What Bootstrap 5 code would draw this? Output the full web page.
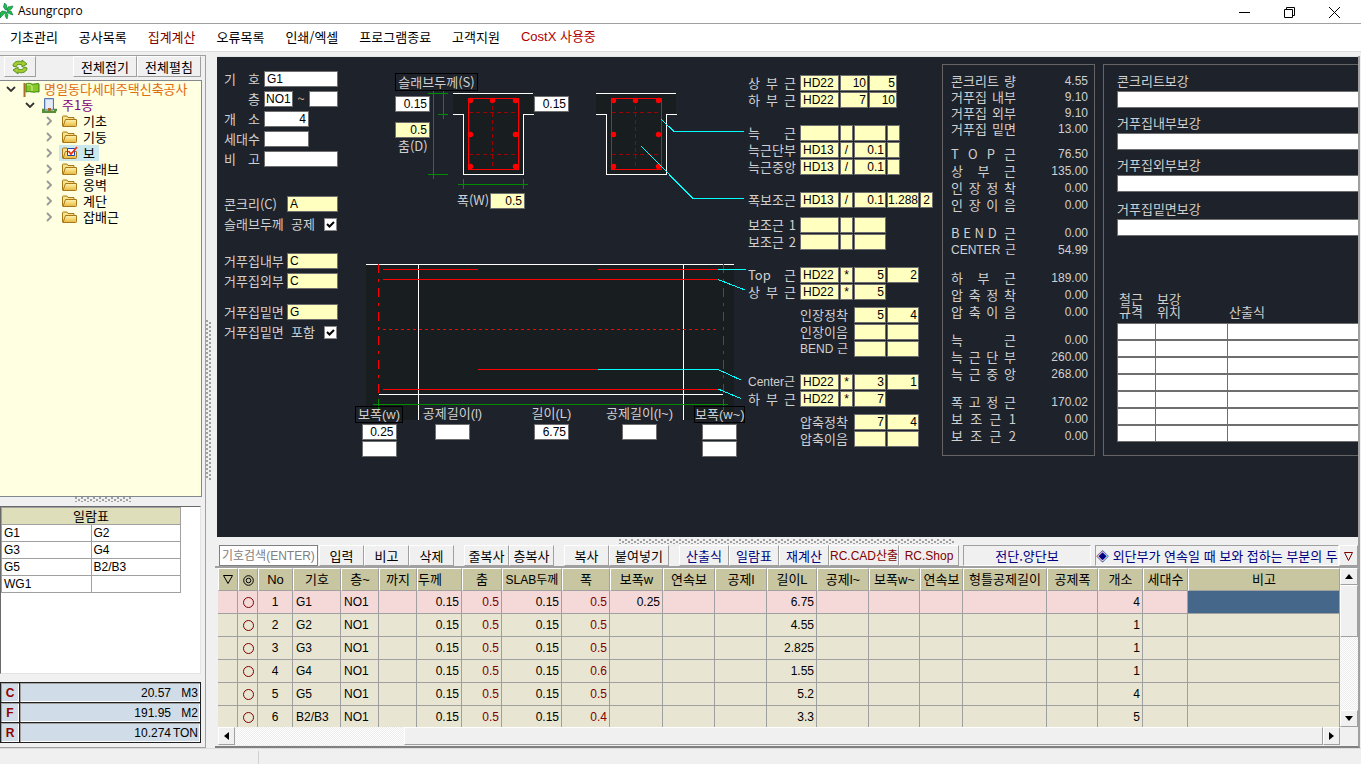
<!DOCTYPE html>
<html lang="ko">
<head>
<meta charset="utf-8">
<meta name="viewport" content="width=device-width, initial-scale=1">
<title>Asungrcpro</title>
<link href="https://cdn.jsdelivr.net/npm/bootstrap@5.3.0/dist/css/bootstrap.min.css" rel="stylesheet">
<style>
:root{--ui:"Noto Sans CJK KR",sans-serif;--latin:"Liberation Sans","Noto Sans CJK KR",sans-serif;--line:#a0a0a0;--face:#f0f0f0;--dark:#1e222a}
body{font:13px/16px var(--ui);color:#000;background:var(--face);overflow:hidden}
button,input{font:inherit;color:inherit;border-radius:0}
.app{height:100vh}
/* window chrome */
.titlebar{height:24px;background:#fff;border-bottom:1px solid var(--line);font:12px/22px "Open Sans",sans-serif}
.winbtn{width:45px;border:0;background:none;padding:0}
.menubar{height:28px;background:#fff;border-bottom:1px solid #dcdcdc;gap:21px;padding:0 10px}
.menubar a{color:#000;text-decoration:none;line-height:26px}
.menubar a.alert-item,.maroon{color:#800000}
.menubar a.cost{color:#b00000;font-family:var(--latin)}
/* left side */
.side{width:206px;border:solid var(--line);border-width:1px 1px 1px 0;margin-top:3px;background:var(--face)}
.raised{border:1px solid;border-color:#fff #a0a0a0 #a0a0a0 #fff;background:var(--face);padding:0;line-height:16px;text-align:center;white-space:nowrap}
.raised.rc{font:12px/16px var(--latin)}
.foldbtn{width:64px;height:21px}
.treebox{background:#ffffe1;border:1px solid #828790;border-left:0;margin:3px 3px 0 0;overflow:hidden}
.treebox li{height:16px;display:flex;align-items:center;white-space:nowrap}
.treebox svg{flex:none}
.lv0{padding-left:6px}.lv1{padding-left:25px}.lv2{padding-left:46px}
.pick{display:flex;align-items:center;gap:5px;height:16px;padding:0 4px 0 2px}
.lv1 .pick,.lv0 .pick{gap:4px}
.lv2 .pick{margin-left:-1px}
.pick.active-node{background:#cce8ef}
.grip{background:radial-gradient(circle at 1px 1px,#a0a0a0 1px,transparent 1px) 0 0/6px 4px,radial-gradient(circle at 1px 1px,#a0a0a0 1px,transparent 1px) 3px 2px/6px 4px}
.grip-s{width:56px;height:5px}
.grip-l{width:336px;height:5px}
.grip-v{width:5px;height:160px}
.listbox{height:168px;background:#fff;border:1px solid #696969;border-right-color:#e3e3e3;border-bottom-color:#e3e3e3;margin-right:4px}
.listbox table{width:180px;table-layout:fixed;border-collapse:collapse}
.listbox th,.listbox td{border:1px solid var(--line);height:17px;padding:0 2px;line-height:14px;font-weight:400}
.listbox td{font:12px/14px var(--latin)}
.listbox th{background:#dedebb;text-align:center}
.totals{background:#d0dce8;border:1px solid #202020;margin:8px 4px 4px 0;font:12px/16px var(--latin)}
.totals th,.totals td{border:1px solid #202020;height:20px;padding:0 2px;box-shadow:inset 1px 1px #a0a0a0,inset -1px -1px #fff}
.totals th{width:19px;text-align:center;color:#900000;font-weight:700}
.unit{display:inline-block;width:27px}
/* design pane */
.work{min-width:0;border-right:2px solid var(--line);border-bottom:2px solid #808080;margin:4px 1px 0 0}
.design{background:var(--dark);color:#d0d0d0;border-top:1px solid #dfe8e4;margin-left:2px;overflow:hidden;min-height:0}
.fld{height:16px;border:1px solid #6e6e6e;background:#fff;color:#000;padding:0 2px;font:12px/14px var(--latin);min-width:0;display:block}
.yel{background:#ffffc0}
.num{text-align:right}
.form-col{width:114px;margin:14px 7px 0 7px}
.frow{height:20px;display:flex;align-items:flex-start;justify-content:space-between}
.just{width:36px;text-align:justify;text-align-last:justify;white-space:nowrap}
.w74{width:74px}.w51{width:51px}.w45{width:45px}.w29{width:29px}.w35{width:35px}
.w29.fld{padding:0 1px;flex:none}
.c39{width:39px}.c28{width:28px}.c13{width:13px}.c32{width:32px}
.c13.fld{padding:0;text-align:center}
.c32.fld,.c28.fld{padding:0 1px}
.tick{appearance:none;width:13px;height:13px;margin:2px 1px 0 0;border:1px solid #888;background:#fff url("data:image/svg+xml,%3Csvg xmlns='http://www.w3.org/2000/svg' viewBox='0 0 11 11'%3E%3Cpath d='M2 5l2.5 2.5L9 3' fill='none' stroke='%23000' stroke-width='2'/%3E%3C/svg%3E")}
.gap-a{margin-top:25px}.gap-b{margin-top:17px}.gap-c{margin-top:11px}
.diagram{width:393px;margin-left:10px;flex:none}
.diagram>svg{display:block;overflow:visible}
.over{position:absolute}
.boxed{border:1px solid #000;line-height:16px;text-align:center;white-space:nowrap}
.diagram label.boxed{line-height:15px}
.dims{display:grid;grid-template-columns:48px 99px 99px 77px 67px}
.dims>div{display:flex;flex-direction:column;align-items:center;gap:1px}
.dims>.at-end{width:51px;justify-self:end}
.dims label{height:17px;white-space:nowrap;font-family:var(--latin)}
.bars{width:188px;flex:none;margin-top:18px}
.brow{display:flex;gap:1px;height:17px}
.brow .just{width:48px;margin-right:3px;flex:none}
.brow .mixed{font:12px/16px var(--latin)}
.brow.sub{padding-left:52px}
.brow.sub .just{margin-right:5px}
.g16{margin-top:16px}.g8{margin-top:8px}.g6{margin-top:6px}
.sumbox{width:153px;height:392px;flex:none;border:1px solid #646464;margin:7px 8px 0 6px;padding:8px 6px 0 8px}
.sumbox dl{margin:0 0 9px}
.sumbox dl.loose{margin-bottom:11px}
.sumbox dl>div{display:flex;justify-content:space-between;height:16px}
.sumbox dl.loose>div{height:17px}
.sumbox dt{font-weight:400;width:65px;text-align-last:justify;white-space:nowrap}
.sumbox dd{margin:0;font:12px/16px var(--latin)}
.addbox{height:392px;border:1px solid #646464;border-right:0;margin-top:7px;padding:8px 0 0 13px;min-width:0}
.addbox .fld{width:100%;height:17px;border-right:0}
.addbox .item{height:42px}
.addbox .item.last-item{margin-top:2px;height:80px}
.addbox label{display:block;height:18px}
.addbox table{width:100%;table-layout:fixed;border-collapse:collapse}
.addbox th{font-weight:400;padding:0 2px 5px;line-height:13px;height:42px;vertical-align:bottom;text-align:left}
.addbox td{padding:0}
/* lower grid */
.tools{height:23px;border-bottom:2px solid var(--line);padding-left:4px;margin-top:8px}
.tools .raised{height:21px;flex:none}
.tools input{width:99px;flex:none;border:1px solid #808080;background:#fff;padding:0 2px;height:21px;font:12px/16px var(--latin);margin-right:1px}
.tools input::placeholder{color:#808080;opacity:1}
.tools .apart{margin-left:10px}
.navy{color:#000080}
.sunk{border:1px solid;border-color:#a0a0a0 #fff #fff #a0a0a0;line-height:19px;text-align:center;white-space:nowrap;overflow:hidden}
.b45{width:45px}.b60{width:60px}.b50{width:50px}.b70{width:70px}
.gridwrap{height:178px;margin-left:3px}
.clip{height:159px;overflow:hidden}
.members{width:100%;table-layout:fixed;border-collapse:separate;border-spacing:0;background:#e8e6d2}
.members th{height:23px;background:#c8c6a0;border:1px solid;border-color:#fff #a0a0a0 #a0a0a0 #fff;font:13px/18px var(--latin);text-align:center;padding:0;white-space:nowrap;overflow:hidden}
.members th.mixed{font-size:12px}
.members td{height:23px;border:solid #a0a0a0;border-width:0 1px 1px 0;padding:0 2px 1px 3px;font:12px/16px var(--latin);white-space:nowrap}
.members tr.now td{background:#f5d9d9}
.members tr.now td.cur{background:#456789}
.r{text-align:right}.m{text-align:center}
.members td.m{padding:0 0 1px}
.ring{width:11px;height:11px;border:1px solid #800000;border-radius:50%;display:block;margin:1px auto 0}
.scroll{background:repeating-conic-gradient(#fff 0 25%,#ececec 0 50%) 0 0/2px 2px}
.scroll button{border:1px solid;border-color:#fff #a0a0a0 #a0a0a0 #fff;background:var(--face);padding:0;display:flex;align-items:center;justify-content:center}
.vs{width:18px;flex:none}.vs button{height:17px}
.hs{height:18px}.hs button{width:17px}
.thumb{background:var(--face);border:1px solid;border-color:#fff #a0a0a0 #a0a0a0 #fff}
.status{height:16px;border-top:1px solid #dcdcdc}
.status div{width:259px;border-right:1px solid #d0d0d0;margin-top:2px}
</style>
</head>
<body>
<div class="app d-flex flex-column">
<header class="titlebar d-flex">
  <svg width="14" height="22" viewBox="0 0 14 22" class="me-1" aria-hidden="true"><g fill="#20c040" stroke="#064" stroke-width=".6"><path d="M5.500 10L3.500 7 4.500 3l2 2 .5 5z"/><path d="M7 10l1-3 5-1-1.500 3L8 11z"/><path d="M7 11.500l4-.5 2 4-3-1-3-1.500z"/><path d="M6 12l2 3-1 4-2-3z"/><path d="M5.500 11.500L2 11l-2 2v5l2-2 3-3z"/></g></svg>
  <span>Asungrcpro</span>
  <div class="ms-auto d-flex">
    <button class="winbtn" aria-label="최소화"><svg width="11" height="11"><path d="M0 5.500h11" stroke="#000"/></svg></button>
    <button class="winbtn" aria-label="복원"><svg width="11" height="11" fill="none" stroke="#000"><path d="M.5 2.500h8v8h-8zM2.500 2.500v-2h8v8h-2"/></svg></button>
    <button class="winbtn me-1" aria-label="닫기"><svg width="11" height="11" stroke="#000"><path d="M0 0l11 11M11 0L0 11"/></svg></button>
  </div>
</header>
<nav class="menubar d-flex">
  <a href="#">기초관리</a><a href="#">공사목록</a><a href="#" class="alert-item">집계계산</a><a href="#">오류목록</a><a href="#">인쇄/엑셀</a><a href="#">프로그램종료</a><a href="#">고객지원</a><a href="#" class="cost">CostX 사용중</a>
</nav>

<main class="d-flex flex-grow-1" style="min-height:0">
<aside class="side d-flex flex-column flex-shrink-0">
  <div class="d-flex px-1 gap-0">
    <button class="raised" style="width:32px" aria-label="새로고침"><svg width="16" height="16" viewBox="0 0 16 16"><g fill="#a4cc30" stroke="#4c8a18" stroke-width=".9"><path d="M1 7c0-4 5-6 9-4V1l5 4-5 3V6C7 5 5 5 4 8z"/><path d="M15 9c0 4-5 6-9 4v2l-5-4 5-3v2c3 1 5 1 6-2z"/></g></svg></button>
    <button class="raised foldbtn ms-auto">전체접기</button>
    <button class="raised foldbtn">전체펼침</button>
  </div>
  <div class="treebox flex-grow-1">
    <svg width="0" height="0" class="d-block"><defs>
      <g id="open"><path d="M1 1l4 4 4-4" fill="none" stroke="#333" stroke-width="1.800"/></g>
      <g id="shut"><path d="M1 1l4 4-4 4" fill="none" stroke="#999" stroke-width="1.800"/></g>
      <linearGradient id="gold" x2="0" y2="1"><stop stop-color="#fff4b0"/><stop offset="1" stop-color="#e8b83c"/></linearGradient>
      <g id="folder" stroke="#a87818"><path d="M1.500 12V3q0-1 1-1H6l1 1.500h6V12z" fill="#f8e08c"/><path d="M4.500 5.500h11v6q0 1-1 1H2z" fill="url(#gold)"/></g>
    </defs></svg>
    <ul class="list-unstyled mb-0">
      <li class="lv0"><svg width="10" height="6" class="me-1"><use href="#open"/></svg><span class="pick"><svg width="18" height="15"><path d="M2.500 1v14" stroke="#a87028" stroke-width="2"/><path d="M4 2c4-2 6 1 8 0 2 0 4-1 5 0v8c-3-1-4 1-6 0-3 0-4-1-7 0z" fill="#86c828" stroke="#3c8010"/><path d="M5 3c4-1 4 1 5 1v5" stroke="#d8f49c" fill="none"/></svg><span style="color:#e06c10">명일동다세대주택신축공사</span></span></li>
      <li class="lv1"><svg width="10" height="6" class="me-1"><use href="#open"/></svg><span class="pick"><svg width="17" height="15"><path d="M3.500.5h9V12h-9z" fill="#b8ccec" stroke="#5478b0"/><path d="M5 3h7M5 5h7M5 7h7M5 9h7M6 2v9M8 2v9M10 2v9" stroke="#fff" stroke-width=".8"/><path d="M7 10h3v4H7z" fill="#b06428"/><path d="M1 14h14M1 12h3M13 12h3" stroke="#589038" stroke-width="2.500"/></svg><span style="color:#800080">주1동</span></span></li>
      <li class="lv2"><svg width="6" height="10" class="me-2"><use href="#shut"/></svg><span class="pick"><svg width="17" height="14"><use href="#folder"/></svg>기초</span></li>
      <li class="lv2"><svg width="6" height="10" class="me-2"><use href="#shut"/></svg><span class="pick"><svg width="17" height="14"><use href="#folder"/></svg>기둥</span></li>
      <li class="lv2"><svg width="6" height="10" class="me-2"><use href="#shut"/></svg><span class="pick active-node"><svg width="17" height="14"><use href="#folder"/><path d="M6.500 2.500h7v7h-7z" fill="#fff" stroke="#1848b0"/><path d="M7.500 5l2.500 3L16 1" fill="none" stroke="#f03010" stroke-width="1.800"/></svg>보</span></li>
      <li class="lv2"><svg width="6" height="10" class="me-2"><use href="#shut"/></svg><span class="pick"><svg width="17" height="14"><use href="#folder"/></svg>슬래브</span></li>
      <li class="lv2"><svg width="6" height="10" class="me-2"><use href="#shut"/></svg><span class="pick"><svg width="17" height="14"><use href="#folder"/></svg>옹벽</span></li>
      <li class="lv2"><svg width="6" height="10" class="me-2"><use href="#shut"/></svg><span class="pick"><svg width="17" height="14"><use href="#folder"/></svg>계단</span></li>
      <li class="lv2"><svg width="6" height="10" class="me-2"><use href="#shut"/></svg><span class="pick"><svg width="17" height="14"><use href="#folder"/></svg>잡배근</span></li>
    </ul>
  </div>
  <div class="grip grip-s mx-auto"></div>
  <div class="listbox mt-1">
    <table>
      <thead><tr><th colspan="2">일람표</th></tr></thead>
      <tbody><tr><td>G1</td><td>G2</td></tr><tr><td>G3</td><td>G4</td></tr><tr><td>G5</td><td>B2/B3</td></tr><tr><td>WG1</td><td></td></tr></tbody>
    </table>
  </div>
  <table class="totals">
    <tr><th scope="row">C</th><td class="r">20.57<span class="unit">M3</span></td></tr>
    <tr><th scope="row">F</th><td class="r">191.95<span class="unit">M2</span></td></tr>
    <tr><th scope="row">R</th><td class="r">10.274<span class="unit">TON</span></td></tr>
  </table>
</aside>
<div class="d-flex align-items-center flex-shrink-0" style="width:9px"><div class="grip grip-v"></div></div>

<section class="work d-flex flex-column flex-grow-1">
  <div class="design d-flex flex-grow-1">
    <form class="form-col flex-shrink-0">
      <div class="frow"><label class="just" for="f1">기 호</label><input id="f1" class="fld w74" value="G1"></div>
      <div class="frow"><label class="just num" style="text-align-last:right" for="f2">층</label><div class="d-flex justify-content-between w74"><input id="f2" class="fld w29" value="NO1"><label for="f3" style="color:#e8b890">~</label><input id="f3" class="fld w29"></div></div>
      <div class="frow justify-content-start"><label class="just me-1" for="f4">개 소</label><input id="f4" class="fld w45 num" value="4"></div>
      <div class="frow justify-content-start"><label class="just me-1" for="f5">세대수</label><input id="f5" class="fld w45"></div>
      <div class="frow"><label class="just" for="f6">비 고</label><input id="f6" class="fld w74"></div>
      <div class="frow gap-a"><label for="f7">콘크리(C)</label><input id="f7" class="fld yel w51" value="A"></div>
      <div class="frow"><label for="f8">슬래브두께&nbsp; 공제</label><input type="checkbox" id="f8" class="tick" checked></div>
      <div class="frow gap-b"><label for="f9">거푸집내부</label><input id="f9" class="fld yel w51" value="C"></div>
      <div class="frow"><label for="f10">거푸집외부</label><input id="f10" class="fld yel w51" value="C"></div>
      <div class="frow gap-c"><label for="f11">거푸집밑면</label><input id="f11" class="fld yel w51" value="G"></div>
      <div class="frow"><label for="f12">거푸집밑면&nbsp; 포함</label><input type="checkbox" id="f12" class="tick" checked></div>
    </form>

    <div class="diagram position-relative">
      <svg width="393" height="349" viewBox="355 57 393 349" fill="none" shape-rendering="crispEdges" aria-label="보 단면도">
        <defs><g id="sect">
          <path d="M453 93h80v21h-10v60h-60v-60h-10z" fill="#181e20"/>
          <path d="M453 93.500h80M453 114.500h10.500v60h60v-60h10" stroke="#fff"/>
          <path d="M469 112.500h48M469 154.500h48M492.500 99v70" stroke="#a00000" stroke-dasharray="4 3"/>
          <path d="M468.500 98.500h50v71h-50z" stroke="#f00"/>
          <g fill="#f00" shape-rendering="auto"><circle cx="470.500" cy="100.500" r="2.700"/><circle cx="492.500" cy="100.500" r="2.700"/><circle cx="515.500" cy="100.500" r="2.700"/><circle cx="470.500" cy="134.500" r="2.700"/><circle cx="515.500" cy="134.500" r="2.700"/><circle cx="470.500" cy="166.500" r="2.700"/><circle cx="515.500" cy="166.500" r="2.700"/></g>
        </g></defs>
        <use href="#sect"/><use href="#sect" x="143"/>
        <path d="M433.500 91v88M443.500 91v28M428 93.500h20M438 114.500h10M428 174.500h20M458 184.500h70M463.500 179v10M523.500 179v10" stroke="#008c00"/>
        <path d="M366 264h368v130H366zM366 394h53v26h-53zM683 394h51v26h-51z" fill="#181e20"/>
        <path d="M366 264.500h368M418.500 264v156M683.500 264v156M379 394.500h344" stroke="#fff"/>
        <path d="M383 269.500h95M598 269.500h120M383 279.500h335M478 369.500h120M383 389.500h335" stroke="#f00"/>
        <path d="M383 329.500h335" stroke="#f00" stroke-dasharray="3 3"/>
        <path d="M378.500 264v130M723.500 264v130" stroke="#f00" stroke-dasharray="9 6 3 6"/>
        <path d="M373 404.500h355M378.500 399v11M723.500 399v11" stroke="#008c00"/>
        <path d="M661 119l13 12.500h70M641 146l52 52.500h51M718 269.500h28M718 279.500l27 10.500M598 369.500h120l23 10.500M718 389l23 9.500" stroke="#0ff"/>
      </svg>
      <label class="over boxed" for="s1" style="left:40px;top:16px;width:83px;height:18px">슬래브두께(S)</label>
      <input id="s1" class="fld num w35 over" style="left:40px;top:39px" value="0.15">
      <input id="s2" class="fld num w35 yel over" style="left:40px;top:65px" value="0.5">
      <label class="over" for="s2" style="left:43px;top:81px">춤(D)</label>
      <input aria-label="슬래브두께 우측" class="fld num w35 over" style="left:179px;top:39px" value="0.15">
      <label class="over" for="s4" style="left:102px;top:135px">폭(W)</label>
      <input id="s4" class="fld num w35 yel over" style="left:135px;top:136px" value="0.5">
      <div class="dims position-relative">
        <div><label class="boxed w-100" for="d1">보폭(w)</label><input id="d1" class="fld num w35" value="0.25"><input aria-label="보폭(w) 2" class="fld w35"></div>
        <div><label for="d2">공제길이(l)</label><input id="d2" class="fld w35"></div>
        <div><label for="d3">길이(L)</label><input id="d3" class="fld num w35" value="6.75"></div>
        <div><label for="d4">공제길이(l~)</label><input id="d4" class="fld w35"></div>
        <div class="at-end"><label class="boxed w-100" for="d5">보폭(w~)</label><input id="d5" class="fld w35"><input aria-label="보폭(w~) 2" class="fld w35"></div>
      </div>
    </div>

    <form class="bars">
      <div class="brow"><label class="just" for="b1">상 부 근</label><input id="b1" class="fld yel c39" value="HD22"><input aria-label="상부근 수량" class="fld yel c28 num" value="10"><input aria-label="상부근 수량 2" class="fld yel c28 num" value="5"></div>
      <div class="brow"><label class="just" for="b2">하 부 근</label><input id="b2" class="fld yel c39" value="HD22"><input aria-label="하부근 수량" class="fld yel c28 num" value="7"><input aria-label="하부근 수량 2" class="fld yel c28 num" value="10"></div>
      <div class="brow g16"><label class="just" for="b3">늑 근</label><input id="b3" class="fld yel c39"><input aria-label="늑근 기호" class="fld yel c13"><input aria-label="늑근 간격" class="fld yel c32"><input aria-label="늑근 수" class="fld yel c13"></div>
      <div class="brow"><label class="just" for="b4">늑근단부</label><input id="b4" class="fld yel c39" value="HD13"><input aria-label="늑근단부 기호" class="fld yel c13" value="/"><input aria-label="늑근단부 간격" class="fld yel c32 num" value="0.1"><input aria-label="늑근단부 수" class="fld yel c13"></div>
      <div class="brow"><label class="just" for="b5">늑근중앙</label><input id="b5" class="fld yel c39" value="HD13"><input aria-label="늑근중앙 기호" class="fld yel c13" value="/"><input aria-label="늑근중앙 간격" class="fld yel c32 num" value="0.1"><input aria-label="늑근중앙 수" class="fld yel c13"></div>
      <div class="brow g16"><label class="just" for="b6">폭보조근</label><input id="b6" class="fld yel c39" value="HD13"><input aria-label="폭보조근 기호" class="fld yel c13" value="/"><input aria-label="폭보조근 간격" class="fld yel c32 num" value="0.1"><input aria-label="폭보조근 길이" class="fld yel c32 num px-0" value="1.288"><input aria-label="폭보조근 수" class="fld yel c13" value="2"></div>
      <div class="brow g8"><label class="just" for="b7">보조근 1</label><input id="b7" class="fld yel c39"><input aria-label="보조근 1 기호" class="fld yel c13"><input aria-label="보조근 1 간격" class="fld yel c32"></div>
      <div class="brow"><label class="just" for="b8">보조근 2</label><input id="b8" class="fld yel c39"><input aria-label="보조근 2 기호" class="fld yel c13"><input aria-label="보조근 2 간격" class="fld yel c32"></div>
      <div class="brow g16"><label class="just" for="b9">Top 근</label><input id="b9" class="fld yel c39" value="HD22"><input aria-label="Top근 기호" class="fld yel c13" value="*"><input aria-label="Top근 수" class="fld yel c32 num" value="5"><input aria-label="Top근 수 2" class="fld yel c32 num" value="2"></div>
      <div class="brow"><label class="just" for="b10">상 부 근</label><input id="b10" class="fld yel c39" value="HD22"><input aria-label="상부근 기호" class="fld yel c13" value="*"><input aria-label="상부근 수" class="fld yel c32 num" value="5"></div>
      <div class="brow sub g6"><label class="just" for="b11">인장정착</label><input id="b11" class="fld yel c32 num" value="5"><input aria-label="인장정착 2" class="fld yel c32 num" value="4"></div>
      <div class="brow sub"><label class="just" for="b12">인장이음</label><input id="b12" class="fld yel c32"><input aria-label="인장이음 2" class="fld yel c32"></div>
      <div class="brow sub"><label class="just mixed" for="b13">BEND 근</label><input id="b13" class="fld yel c32"><input aria-label="BEND근 2" class="fld yel c32"></div>
      <div class="brow g16"><label class="just mixed" for="b14">Center근</label><input id="b14" class="fld yel c39" value="HD22"><input aria-label="Center근 기호" class="fld yel c13" value="*"><input aria-label="Center근 수" class="fld yel c32 num" value="3"><input aria-label="Center근 수 2" class="fld yel c32 num" value="1"></div>
      <div class="brow"><label class="just" for="b15">하 부 근</label><input id="b15" class="fld yel c39" value="HD22"><input aria-label="하부근 기호" class="fld yel c13" value="*"><input aria-label="하부근 수" class="fld yel c32 num" value="7"></div>
      <div class="brow sub g6"><label class="just" for="b16">압축정착</label><input id="b16" class="fld yel c32 num" value="7"><input aria-label="압축정착 2" class="fld yel c32 num" value="4"></div>
      <div class="brow sub"><label class="just" for="b17">압축이음</label><input id="b17" class="fld yel c32"><input aria-label="압축이음 2" class="fld yel c32"></div>
    </form>

    <div class="sumbox">
      <dl><div><dt>콘크리트 량</dt><dd>4.55</dd></div><div><dt>거푸집 내부</dt><dd>9.10</dd></div><div><dt>거푸집 외부</dt><dd>9.10</dd></div><div><dt>거푸집 밑면</dt><dd>13.00</dd></div></dl>
      <dl class="loose"><div><dt>T O P 근</dt><dd>76.50</dd></div><div><dt>상 부 근</dt><dd>135.00</dd></div><div><dt>인 장 정 착</dt><dd>0.00</dd></div><div><dt>인 장 이 음</dt><dd>0.00</dd></div></dl>
      <dl class="loose"><div><dt>B E N D &nbsp;근</dt><dd>0.00</dd></div><div><dt style="font-family:var(--latin);font-size:12px">CENTER 근</dt><dd>54.99</dd></div></dl>
      <dl class="loose"><div><dt>하 부 근</dt><dd>189.00</dd></div><div><dt>압 축 정 착</dt><dd>0.00</dd></div><div><dt>압 축 이 음</dt><dd>0.00</dd></div></dl>
      <dl class="loose"><div><dt>늑 근</dt><dd>0.00</dd></div><div><dt>늑 근 단 부</dt><dd>260.00</dd></div><div><dt>늑 근 중 앙</dt><dd>268.00</dd></div></dl>
      <dl class="loose"><div><dt>폭 고 정 근</dt><dd>170.02</dd></div><div><dt>보 조 근 1</dt><dd>0.00</dd></div><div><dt>보 조 근 2</dt><dd>0.00</dd></div></dl>
    </div>

    <div class="addbox flex-grow-1">
      <div class="item"><label for="a1">콘크리트보강</label><input id="a1" class="fld"></div>
      <div class="item"><label for="a2">거푸집내부보강</label><input id="a2" class="fld"></div>
      <div class="item"><label for="a3">거푸집외부보강</label><input id="a3" class="fld"></div>
      <div class="item last-item"><label for="a4">거푸집밑면보강</label><input id="a4" class="fld"></div>
      <table>
        <colgroup><col style="width:38px"><col style="width:72px"><col></colgroup>
        <thead><tr><th>철근<br>규격</th><th>보강<br>위치</th><th>산출식</th></tr></thead>
        <tbody>
        <tr><td><input class="fld" aria-label="규격 1"></td><td><input class="fld" aria-label="위치 1"></td><td><input class="fld" aria-label="산출식 1"></td></tr>
        <tr><td><input class="fld" aria-label="규격 2"></td><td><input class="fld" aria-label="위치 2"></td><td><input class="fld" aria-label="산출식 2"></td></tr>
        <tr><td><input class="fld" aria-label="규격 3"></td><td><input class="fld" aria-label="위치 3"></td><td><input class="fld" aria-label="산출식 3"></td></tr>
        <tr><td><input class="fld" aria-label="규격 4"></td><td><input class="fld" aria-label="위치 4"></td><td><input class="fld" aria-label="산출식 4"></td></tr>
        <tr><td><input class="fld" aria-label="규격 5"></td><td><input class="fld" aria-label="위치 5"></td><td><input class="fld" aria-label="산출식 5"></td></tr>
        <tr><td><input class="fld" aria-label="규격 6"></td><td><input class="fld" aria-label="위치 6"></td><td><input class="fld" aria-label="산출식 6"></td></tr>
        <tr><td><input class="fld" aria-label="규격 7"></td><td><input class="fld" aria-label="위치 7"></td><td><input class="fld" aria-label="산출식 7"></td></tr>
        </tbody>
      </table>
    </div>
  </div>

  <div class="position-relative"><div class="grip grip-l over" style="left:404px;top:2px"></div></div>
  <div class="tools d-flex flex-shrink-0">
    <input aria-label="기호검색" placeholder="기호검색(ENTER)">
    <button class="raised b45">입력</button><button class="raised b45">비고</button><button class="raised b45">삭제</button>
    <button class="raised b45 apart">줄복사</button><button class="raised b45">층복사</button>
    <button class="raised b45 apart">복사</button><button class="raised b60">붙여넣기</button>
    <button class="raised b50 apart navy">산출식</button><button class="raised b50 navy">일람표</button><button class="raised b50 navy">재계산</button><button class="raised b70 rc maroon">RC.CAD산출</button><button class="raised b60 rc maroon">RC.Shop</button>
    <div class="sunk navy flex-shrink-0 mx-1" style="width:128px">전단.양단보</div>
    <div class="sunk navy flex-grow-1 text-start" style="flex-basis:0">◈ 외단부가 연속일 때 보와 접하는 부분의 두</div>
    <button class="raised maroon" style="width:19px" aria-label="펼치기"><svg width="9" height="10" fill="none" stroke="#800000"><path d="M.5 .5h8l-4 8z"/></svg></button>
  </div>
  <div class="gridwrap d-flex flex-shrink-0">
    <div class="flex-grow-1" style="min-width:0">
      <div class="clip">
      <table class="members">
        <colgroup><col style="width:20px"><col style="width:20px"><col style="width:35px"><col style="width:48px"><col style="width:38px"><col style="width:38px"><col style="width:45px"><col style="width:40px"><col style="width:60px"><col style="width:48px"><col style="width:53px"><col style="width:52px"><col style="width:52px"><col style="width:50px"><col style="width:52px"><col style="width:51px"><col style="width:43px"><col style="width:84px"><col style="width:51px"><col style="width:45px"><col style="width:45px"><col></colgroup>
        <thead><tr><th><svg width="10" height="10" fill="none" stroke="#000" role="img" aria-label="▽"><path d="M.5 .5h9l-4.500 8z"/></svg></th><th><svg width="11" height="11" fill="none" stroke="#000" role="img" aria-label="◎"><circle cx="5.500" cy="5.500" r="4.800"/><circle cx="5.500" cy="5.500" r="2.300"/></svg></th><th>No</th><th>기호</th><th>층~</th><th>까지</th><th class="text-start">두께</th><th>춤</th><th class="mixed">SLAB두께</th><th>폭</th><th>보폭w</th><th>연속보</th><th>공제l</th><th>길이L</th><th>공제l~</th><th>보폭w~</th><th>연속보</th><th>형틀공제길이</th><th>공제폭</th><th>개소</th><th>세대수</th><th>비고</th></tr></thead>
        <tbody>
        <tr class="now"><td></td><td><i class="ring"></i></td><td class="m">1</td><td>G1</td><td>NO1</td><td></td><td class="r">0.15</td><td class="r maroon">0.5</td><td class="r">0.15</td><td class="r maroon">0.5</td><td class="r">0.25</td><td></td><td></td><td class="r">6.75</td><td></td><td></td><td></td><td></td><td></td><td class="r">4</td><td></td><td class="cur"></td></tr>
        <tr><td></td><td><i class="ring"></i></td><td class="m">2</td><td>G2</td><td>NO1</td><td></td><td class="r">0.15</td><td class="r maroon">0.5</td><td class="r">0.15</td><td class="r maroon">0.5</td><td></td><td></td><td></td><td class="r">4.55</td><td></td><td></td><td></td><td></td><td></td><td class="r">1</td><td></td><td></td></tr>
        <tr><td></td><td><i class="ring"></i></td><td class="m">3</td><td>G3</td><td>NO1</td><td></td><td class="r">0.15</td><td class="r maroon">0.5</td><td class="r">0.15</td><td class="r maroon">0.5</td><td></td><td></td><td></td><td class="r">2.825</td><td></td><td></td><td></td><td></td><td></td><td class="r">1</td><td></td><td></td></tr>
        <tr><td></td><td><i class="ring"></i></td><td class="m">4</td><td>G4</td><td>NO1</td><td></td><td class="r">0.15</td><td class="r maroon">0.5</td><td class="r">0.15</td><td class="r maroon">0.6</td><td></td><td></td><td></td><td class="r">1.55</td><td></td><td></td><td></td><td></td><td></td><td class="r">1</td><td></td><td></td></tr>
        <tr><td></td><td><i class="ring"></i></td><td class="m">5</td><td>G5</td><td>NO1</td><td></td><td class="r">0.15</td><td class="r maroon">0.5</td><td class="r">0.15</td><td class="r maroon">0.5</td><td></td><td></td><td></td><td class="r">5.2</td><td></td><td></td><td></td><td></td><td></td><td class="r">4</td><td></td><td></td></tr>
        <tr><td></td><td><i class="ring"></i></td><td class="m">6</td><td>B2/B3</td><td>NO1</td><td></td><td class="r">0.15</td><td class="r maroon">0.5</td><td class="r">0.15</td><td class="r maroon">0.4</td><td></td><td></td><td></td><td class="r">3.3</td><td></td><td></td><td></td><td></td><td></td><td class="r">5</td><td></td><td></td></tr>
        </tbody>
      </table>
      </div>
      <div class="scroll hs d-flex"><button aria-label="왼쪽"><svg width="5" height="8"><path d="M5 0v8L0 4z"/></svg></button><div style="width:169px"></div><div class="thumb flex-grow-1"></div><button aria-label="오른쪽"><svg width="5" height="8"><path d="M0 0v8l5-4z"/></svg></button></div>
    </div>
    <div class="vs d-flex flex-column"><div class="scroll d-flex flex-column" style="height:159px"><button aria-label="위"><svg width="8" height="5"><path d="M0 5h8L4 0z"/></svg></button><div class="thumb" style="height:52px"></div><button class="mt-auto" aria-label="아래"><svg width="8" height="5"><path d="M0 0h8L4 5z"/></svg></button></div></div>
  </div>
</section>
</main>
<footer class="status"><div>&nbsp;</div></footer>
</div>
<script src="https://cdn.jsdelivr.net/npm/bootstrap@5.3.0/dist/js/bootstrap.bundle.min.js"></script>
</body>
</html>
